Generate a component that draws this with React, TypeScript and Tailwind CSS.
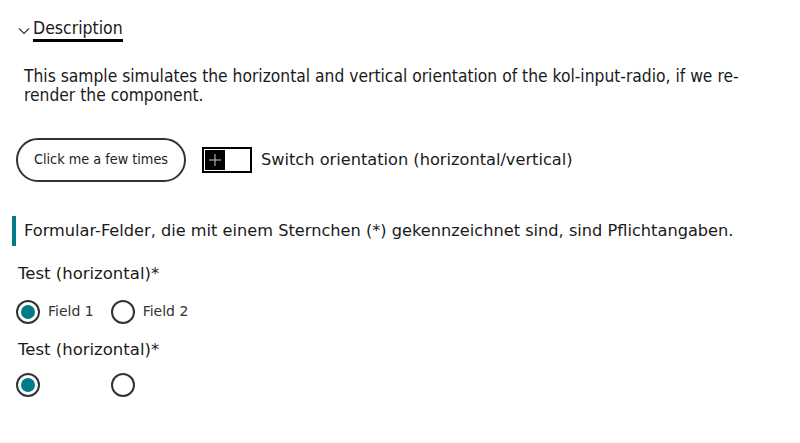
import React from "react";

function Radio({ checked }: { checked: boolean }) {
  return (
    <span className="flex h-[24px] w-[24px] shrink-0 items-center justify-center rounded-full border-2 border-[#333]">
      {checked && <span className="h-[14px] w-[14px] rounded-full bg-[#007b87]" />}
    </span>
  );
}

const cond = { fontFamily: '"DejaVu Sans Condensed", "DejaVu Sans", sans-serif' };

export default function App() {
  return (
    <div className="h-[443px] w-[800px] bg-white text-[#1a1a1a]" style={{ fontFamily: '"DejaVu Sans", Verdana, sans-serif' }}>
      <div className="flex items-center pl-[18px] pt-[18px]">
        <svg width="12" height="8" viewBox="0 0 12 8" className="mr-[3px] mt-[2px]">
          <path d="M1 1.5 L6 6.5 L11 1.5" fill="none" stroke="#333" strokeWidth="1.1" />
        </svg>
        <span className="border-b-[3px] border-black pb-[1px] text-[17.5px] leading-[20px]" style={cond}>
          Description
        </span>
      </div>
      <p className="mt-[25px] pl-[24px] pr-[20px] text-[17.3px] leading-[19px]" style={cond}>
        This sample simulates the horizontal and vertical orientation of the kol-input-radio, if we re-render the component.
      </p>
      <div className="mt-[33px] flex items-center pl-[16px]">
        <button className="h-[44px] w-[170px] rounded-full border-2 border-[#333] text-[14.3px] text-[#222]" style={cond}>
          Click me a few times
        </button>
        <span className="ml-[16px] flex h-[26px] w-[50px] items-center border-2 border-black p-[1px]">
          <span className="flex h-[20px] w-[20px] items-center justify-center bg-black">
            <svg width="14" height="14" viewBox="0 0 14 14">
              <path d="M7 1 V13 M1 7 H13" stroke="#ccc" strokeWidth="1" />
            </svg>
          </span>
        </span>
        <span className="ml-[9px] text-[16.2px]">Switch orientation (horizontal/vertical)</span>
      </div>
      <div className="mt-[34px] ml-[12px] flex h-[30px] items-center border-l-[4px] border-[#007b87] pl-[8px] text-[16.2px]">
        Formular-Felder, die mit einem Sternchen (*) gekennzeichnet sind, sind Pflichtangaben.
      </div>
      <div className="mt-[16px] pl-[18px] text-[16.5px]">Test (horizontal)*</div>
      <div className="mt-[13px] flex items-center pl-[16px]">
        <Radio checked />
        <span className="ml-[8px] text-[14px] text-[#333]">Field 1</span>
        <span className="ml-[17px]"><Radio checked={false} /></span>
        <span className="ml-[8px] text-[14px] text-[#333]">Field 2</span>
      </div>
      <div className="mt-[14px] pl-[18px] text-[16.5px]">Test (horizontal)*</div>
      <div className="mt-[10px] flex items-center pl-[16px]">
        <Radio checked />
        <span className="ml-[71px]"><Radio checked={false} /></span>
      </div>
    </div>
  );
}
